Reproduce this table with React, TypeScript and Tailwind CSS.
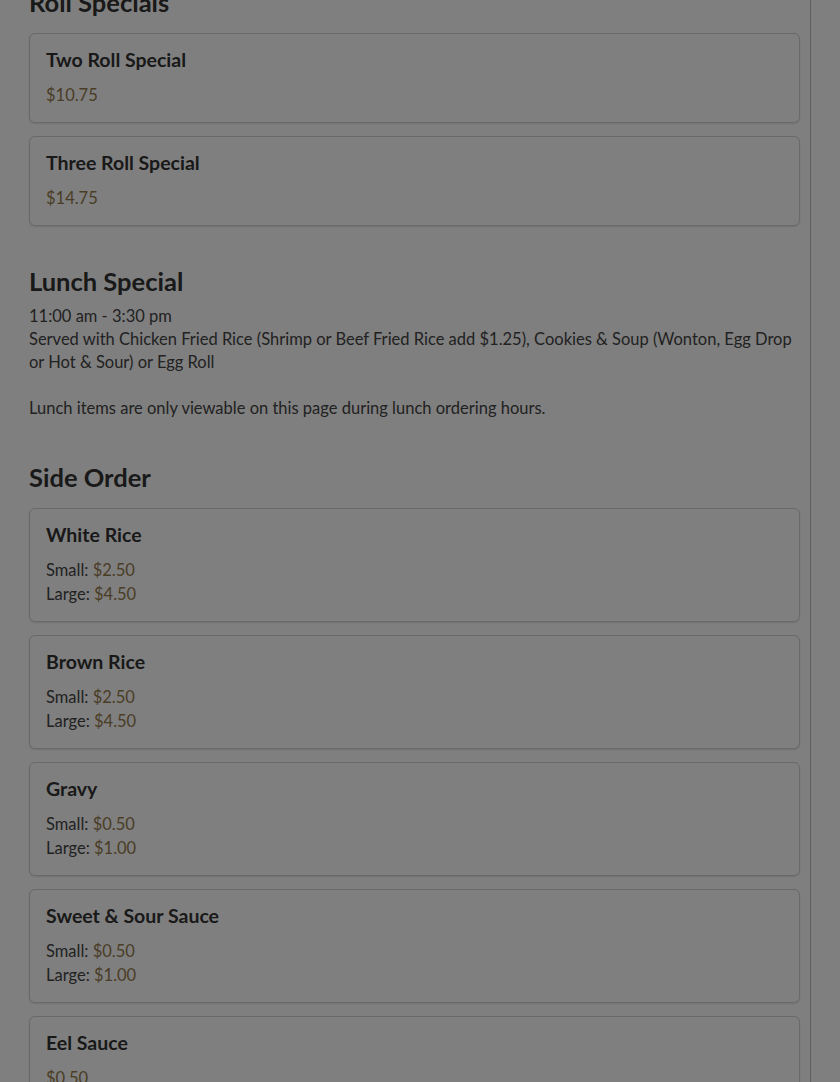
import React from "react";

type Price = { label?: string; value: string };
type Item = { name: string; prices: Price[] };

const rollSpecials: Item[] = [
  { name: "Two Roll Special", prices: [{ value: "$10.75" }] },
  { name: "Three Roll Special", prices: [{ value: "$14.75" }] },
];

const sideOrders: Item[] = [
  { name: "White Rice", prices: [{ label: "Small:", value: "$2.50" }, { label: "Large:", value: "$4.50" }] },
  { name: "Brown Rice", prices: [{ label: "Small:", value: "$2.50" }, { label: "Large:", value: "$4.50" }] },
  { name: "Gravy", prices: [{ label: "Small:", value: "$0.50" }, { label: "Large:", value: "$1.00" }] },
  { name: "Sweet & Sour Sauce", prices: [{ label: "Small:", value: "$0.50" }, { label: "Large:", value: "$1.00" }] },
  { name: "Eel Sauce", prices: [{ value: "$0.50" }] },
];

function MenuCard({ item }: { item: Item }) {
  return (
    <div className="rounded-md border border-[#d2d2d2] bg-white px-4 pt-[13px] pb-[15px] shadow-[0_1px_2px_rgba(0,0,0,0.12)]">
      <h3 className="text-[19.5px] font-bold leading-[26px] text-[#333]">{item.name}</h3>
      <div className="mt-[10px]">
        {item.prices.map((p, i) => (
          <p key={i} className="text-[16.5px] leading-[24px] text-[#444]">
            {p.label && <span>{p.label} </span>}
            <span className="text-[#957a4c]">{p.value}</span>
          </p>
        ))}
      </div>
    </div>
  );
}

export default function App() {
  return (
    <div className="relative h-[1082px] overflow-hidden bg-white font-['Lato','Noto_Sans',sans-serif]">
      <div className="flex">
        <div className="-mt-[14px] w-[811px] border-r border-[#bcbcbc] pl-[29px] pr-[10px]">
          {/* Roll Specials */}
          <h2 className="text-[25.5px] font-bold leading-[32px] text-[#333]">Roll Specials</h2>
          <div className="mt-[15px] flex flex-col gap-[13px]">
            {rollSpecials.map((item) => (
              <MenuCard key={item.name} item={item} />
            ))}
          </div>

          {/* Lunch Special */}
          <h2 className="mt-[39px] text-[25.5px] font-bold leading-[32px] text-[#333]">Lunch Special</h2>
          <div className="mt-[8px] text-[16.5px] leading-[23px] text-[#444]">
            <p>11:00 am - 3:30 pm</p>
            <p>
              Served with Chicken Fried Rice (Shrimp or Beef Fried Rice add $1.25), Cookies &amp; Soup (Wonton, Egg Drop
              or Hot &amp; Sour) or Egg Roll
            </p>
            <p className="mt-[23px]">Lunch items are only viewable on this page during lunch ordering hours.</p>
          </div>

          {/* Side Order */}
          <h2 className="mt-[41px] text-[25.5px] font-bold leading-[32px] text-[#333]">Side Order</h2>
          <div className="mt-[15px] flex flex-col gap-[13px]">
            {sideOrders.map((item) => (
              <MenuCard key={item.name} item={item} />
            ))}
          </div>
        </div>
        <div className="flex-1" />
      </div>

      {/* modal backdrop */}
      <div className="fixed inset-0 bg-black/50" />
    </div>
  );
}
